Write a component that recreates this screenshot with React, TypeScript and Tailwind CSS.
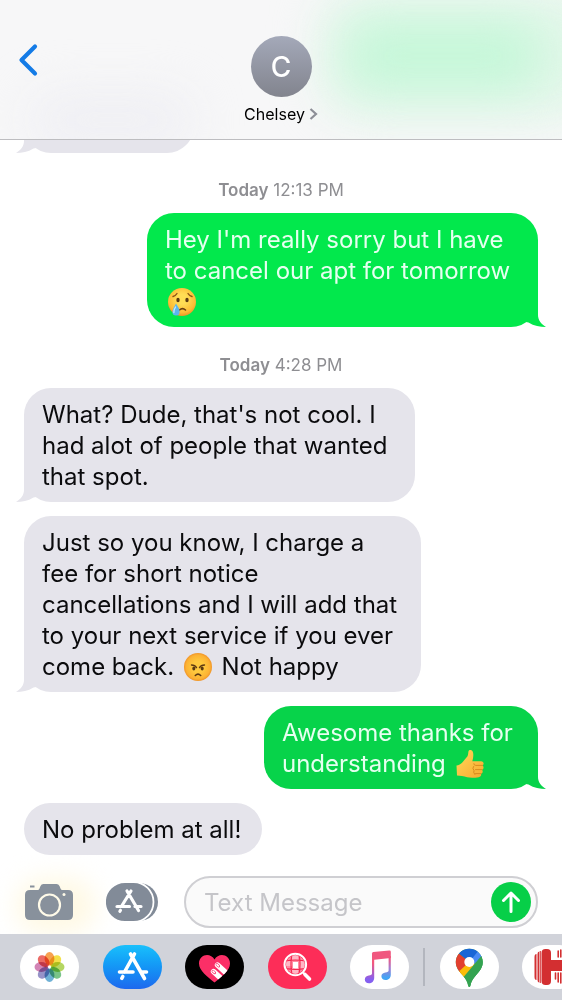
import React from 'react';

type Message = {
  from: 'me' | 'them';
  lines: React.ReactNode[];
  className: string;
  tail?: boolean;
};

function CryingFace() {
  return (
    <svg viewBox="0 0 30 30" role="img" aria-label="crying face" className="mx-0.5 inline-block size-[30px] align-[-7px]">
      <defs>
        <radialGradient id="cry" cx="0.5" cy="0.4" r="0.6">
          <stop offset="0.3" stopColor="#ffdd55" />
          <stop offset="0.8" stopColor="#fdbb35" />
          <stop offset="1" stopColor="#ee9427" />
        </radialGradient>
      </defs>
      <circle cx="15" cy="15" r="14" fill="url(#cry)" />
      <path d="M6 9.500q2.500-.5 4-3M25 9.500q-2.500-.5-4-3" stroke="#8a5414" strokeWidth="1.400" fill="none" strokeLinecap="round" />
      <ellipse cx="11" cy="13" rx="1.700" ry="2.300" fill="#5b3a12" />
      <ellipse cx="20" cy="13" rx="1.700" ry="2.300" fill="#5b3a12" />
      <path d="M12.500 23q3-2.800 6 0" stroke="#6b3f10" strokeWidth="1.600" fill="none" strokeLinecap="round" />
      <path d="M9 16.500c2.500 4 3.800 6 3.600 8.500a3.600 3.600 0 0 1-7.200 0c0-2.500 1.500-4.500 3.600-8.500z" fill="#5cb5ee" />
      <path d="M8.500 20c-1.500 2.500-2 4-1.600 5.500" stroke="#c9ecff" strokeWidth="1.300" fill="none" strokeLinecap="round" />
    </svg>
  );
}

function AngryFace() {
  return (
    <svg viewBox="0 0 30 30" role="img" aria-label="angry face" className="mx-0.5 inline-block size-[30px] align-[-7px]">
      <defs>
        <radialGradient id="angry" cx="0.5" cy="0.5" r="0.5">
          <stop offset="0.4" stopColor="#ffc93e" />
          <stop offset="0.85" stopColor="#fcb233" />
          <stop offset="1" stopColor="#f0952a" />
        </radialGradient>
      </defs>
      <circle cx="15" cy="15" r="14" fill="url(#angry)" />
      <path d="M8.500 13c2.500 0 4 .8 5 2.600M21.500 13c-2.500 0-4 .8-5 2.600" stroke="#5f3a12" strokeWidth="1.400" fill="none" strokeLinecap="round" />
      <ellipse cx="10.800" cy="16.500" rx="1.500" ry="2" fill="#5b3a12" />
      <ellipse cx="19.200" cy="16.500" rx="1.500" ry="2" fill="#5b3a12" />
      <path d="M12.300 23.500q2.700-2.600 5.400 0" stroke="#5f3a12" strokeWidth="1.600" fill="none" strokeLinecap="round" />
    </svg>
  );
}

function ThumbsUp() {
  return (
    <svg viewBox="0 0 30 30" role="img" aria-label="thumbs up" className="mx-0.5 inline-block size-[30px] align-[-7px]">
      <defs>
        <linearGradient id="thumb" x1="0" y1="0" x2="1" y2="1">
          <stop offset="0" stopColor="#ffd95a" />
          <stop offset="1" stopColor="#f7a92f" />
        </linearGradient>
      </defs>
      <path
        d="M1.500 16.500c2-.3 4.500-1.500 6-3.300l5-6c.8-1.300.6-3.200 1-4.900.5-1.800 3.400-1.700 4.300.4 1 2.500.4 6.500-.5 9.500h8.700c3 0 3.400 3.600 1.200 4.300 2 .8 1.700 3.900-.3 4.300 1.400 1 1 3.500-1 4 .8 1.500-.2 3.200-2.200 3.400-3.500.6-8.500.8-11.500.1-3.500-1-7-1.800-10.200-1.800z"
        fill="url(#thumb)"
      />
      <path d="M27.500 16.400h-6.700q-2 0-2-1.700M27 20.600h-6.500M26 24.600h-5.500M18.500 17.500q-1.500 2 .5 4-1 2 .8 4" stroke="#d98a1d" strokeWidth="1" fill="none" strokeLinecap="round" />
    </svg>
  );
}

function Tail({ from }: { from: 'me' | 'them' }) {
  return from === 'me' ? (
    <svg viewBox="0 0 20 27" className="absolute -right-2 bottom-0 h-[27px] w-5" fill="currentColor" aria-hidden="true">
      <path d="M12 0v15c0 5 3 9 8 12-6 0-12-1-17.500-4.500L0 22V0z" />
    </svg>
  ) : (
    <svg viewBox="0 0 20 27" className="absolute -left-2 bottom-0 h-[27px] w-5" fill="currentColor" aria-hidden="true">
      <path d="M8 0v15c0 5-3 9-8 12 6 0 12-1 17.500-4.500L20 22V0z" />
    </svg>
  );
}

function Bubble({ from, lines, className, tail }: Message) {
  return (
    <div className={'relative max-w-full rounded-[27px] pt-[11px] pb-[10px] pl-[18px] text-2xl leading-[31px] whitespace-nowrap ' + className}>
      {tail && <Tail from={from} />}
      <p className={from === 'me' ? 'relative text-[#e6fff0]' : 'relative text-[#0b0b0d]'}>
        {lines.map((line, index) => (
          <span key={index} className="block h-[31px]">
            {line}
          </span>
        ))}
      </p>
    </div>
  );
}

function Timestamp({ time, className }: { time: string; className: string }) {
  return (
    <p className={'text-center text-[17px] leading-5 text-[#8e8e92] ' + className}>
      <strong className="font-semibold">Today</strong> {time}
    </p>
  );
}

function PhotosIcon() {
  const petals = ['#f58a24', '#f0d91c', '#a3cc3a', '#57b56a', '#4b9dcb', '#7d78ba', '#c765a2', '#e64640'];
  return (
    <svg viewBox="0 0 59 44" className="h-11 w-[59px]">
      {petals.map((color, index) => (
        <ellipse key={color} cx="29.500" cy="13.800" rx="4.900" ry="6.800" fill={color} className="mix-blend-multiply" opacity="0.8" transform={`rotate(${index * 45} 29.5 22)`} />
      ))}
    </svg>
  );
}

function StoreIcon() {
  return (
    <svg viewBox="0 0 59 44" className="h-11 w-[59px]" stroke="#fff" strokeWidth="3.600" strokeLinecap="round" fill="none">
      <path d="M31.500 9L21.500 27M27.500 9l14 24.500M16.500 27H30M38 27h5.500M19.800 31.500l-1 1.800" />
    </svg>
  );
}

function HeartIcon() {
  return (
    <svg viewBox="0 0 59 44" className="h-11 w-[59px]">
      <defs>
        <clipPath id="heart">
          <path d="M29.500 37.500C23 32 14 26 14 18.500c0-9.500 11.500-11.500 15.500-4 4-7.500 15.500-5.500 15.500 4 0 7.500-9 13.500-15.500 19z" />
        </clipPath>
      </defs>
      <g clipPath="url(#heart)">
        <path d="M10 5h40v35H10z" fill="#fb2f67" />
        <path d="M32.500 20l13 12M28.500 26.500l13 12" stroke="#fff" strokeWidth="5.400" strokeLinecap="round" />
        <path d="M32 19.600l1.600 1.500M28 26.200l1.600 1.500" stroke="#fb2f67" strokeWidth="2.800" strokeLinecap="round" />
        <path d="M32 19.600l1.400 1.300M28 26.200l1.400 1.300" stroke="#fff" strokeWidth="1.600" strokeLinecap="round" />
      </g>
    </svg>
  );
}

function ImagesIcon() {
  return (
    <svg viewBox="0 0 59 44" className="h-11 w-[59px]" fill="none">
      <defs>
        <clipPath id="lens">
          <circle cx="27.300" cy="19.500" r="9.300" />
        </clipPath>
      </defs>
      <g clipPath="url(#lens)">
        <path d="M17 9h21v21H17z" fill="#ff8da3" />
        <path d="M24 9h6v6h-6zM31 15h7v8h-7zM17 15h7v6h-7zM24 23h6v8h-6z" fill="#ffb7c5" />
        <path d="M25 17h5v6h-5z" fill="#fff" />
        <path d="M24 9q-2 10 0 21M31 9q2 10 0 21M17 16q10-2 21 0M17 23.500q10 2 21 0" stroke="#f5274f" strokeWidth="1.200" />
      </g>
      <circle cx="27.300" cy="19.500" r="10.800" stroke="#fff" strokeWidth="2" />
      <path d="M35 27.500l2 2" stroke="#fff" strokeWidth="2" />
      <path d="M37 29.500l4.500 4.500" stroke="#fff" strokeWidth="3.600" strokeLinecap="round" />
    </svg>
  );
}

function MusicIcon() {
  return (
    <svg viewBox="0 0 59 44" className="h-11 w-[59px]">
      <defs>
        <linearGradient id="leftNote" x1="0" y1="0" x2="0" y2="1">
          <stop offset="0.2" stopColor="#f4587c" />
          <stop offset="0.85" stopColor="#8560f0" />
        </linearGradient>
        <linearGradient id="rightNote" x1="0" y1="0" x2="0" y2="1">
          <stop offset="0.1" stopColor="#f0577f" />
          <stop offset="0.5" stopColor="#a47bd0" />
          <stop offset="0.9" stopColor="#42a5f5" />
        </linearGradient>
      </defs>
      <path d="M22 8.500q0-1.300 1.300-1.500l16-1.400q1.500-.1 1.500 1.300v6l-18.800 2z" fill="#f0577f" />
      <path d="M22 13h2.200v19.500c0 4-2.500 5.800-5.200 5.800-2.500 0-4.200-1.500-4.200-3.700 0-2.500 1.700-3.700 4-4.100 2.200-.4 3.200-.7 3.200-2z" fill="url(#leftNote)" />
      <path d="M38.600 11h2.200v18.500c0 4-2.500 5.500-5.200 5.500-2.500 0-4.200-1.500-4.200-3.700 0-2.500 1.700-3.500 4-3.900 2.200-.4 3.200-.7 3.200-2z" fill="url(#rightNote)" />
    </svg>
  );
}

function MapsIcon() {
  return (
    <svg viewBox="0 0 59 44" className="h-11 w-[59px]">
      <defs>
        <clipPath id="pin">
          <path d="M29.300 3.700c7.500 0 13.500 6 13.500 13.300 0 6-3.500 9.500-7 13.500-3 3.500-4.500 6-5.200 9.500-.4 2.500-2.200 2.500-2.600 0-.7-3.500-2.200-6-5.200-9.500-3.500-4-7-7.500-7-13.500 0-7.300 6-13.300 13.500-13.300z" />
        </clipPath>
      </defs>
      <g clipPath="url(#pin)">
        <path d="M10 0h40v44H10z" fill="#34a351" />
        <path d="M18 7.500L29.300 17 20 29 8 27V8z" fill="#e2402f" />
        <path d="M29.300 17L15 30l6 6L37 18z" fill="#fbbc08" />
        <path d="M16 6L29.300 17l11-12L38 0H16z" fill="#1a66d6" />
        <path d="M39 5L29.300 17l5 2 9-8.500z" fill="#4a8af4" />
        <path d="M43 9L18.500 38 30 46l20-28z" fill="#34a351" />
      </g>
      <circle cx="29.300" cy="17" r="5" fill="#fff" />
    </svg>
  );
}

function HIcon() {
  return (
    <svg viewBox="0 0 59 44" className="h-11 w-[59px]" fill="#d32f31">
      <rect x="19.500" y="4" width="9.500" height="36" rx="4" />
      <path d="M28 15h17v11H28z" />
      <path d="M12.500 12q0-3 2-3v26q-2 0-2-3zM15.500 9q0-2.500 1.800-2.500v31q-1.800 0-1.800-2.500z" />
      <path d="M18.300 6v32" stroke="#d32f31" strokeWidth="1" />
      <path d="M33.500 28v6M36.200 28v9M38.800 28v10M36.200 6v6M38.800 5v7" stroke="#d32f31" strokeWidth="1.600" strokeLinecap="round" />
      <rect x="40" y="4" width="9.500" height="36" rx="3" />
    </svg>
  );
}

const trayApps = [
  { name: 'Photos', icon: <PhotosIcon />, className: 'bg-white' },
  { name: 'App Store', icon: <StoreIcon />, className: 'bg-linear-to-b from-[#1bc0fb] to-[#1e68ee]' },
  { name: 'Digital Touch', icon: <HeartIcon />, className: 'bg-black' },
  { name: 'Images', icon: <ImagesIcon />, className: 'bg-[#fd2d58]' },
  { name: 'Music', icon: <MusicIcon />, className: 'bg-white' },
];

export default function App() {
  return (
    <div className="flex h-screen w-full flex-col overflow-hidden bg-white font-['Inter','Liberation_Sans',sans-serif]">
      <header className="relative shrink-0 overflow-hidden border-b border-[#bdbdc0] bg-[#f7f7f8]">
        <div className="absolute -top-2 -right-10 h-[124px] w-[280px] rounded-[40px] bg-[#e0f7e8] blur-xl" />
        <div className="absolute top-6 right-6 h-16 w-[190px] rounded-[20px] bg-[#c4f7d8] blur-xl" />
        <div className="absolute top-24 left-8 h-12 w-40 rounded-full bg-[#eeeef3] blur-xl" />
        <div className="relative grid grid-cols-[1fr_auto_1fr] items-start pt-9 pb-[15px]">
          <button aria-label="Back" className="ml-4 flex h-12 w-8 items-center">
            <svg viewBox="0 0 24 36" className="h-9 w-6" fill="none" stroke="#147be6" strokeWidth="4.200" strokeLinecap="round" strokeLinejoin="round">
              <path d="M19 4.500L5.500 18 19 31.500" />
            </svg>
          </button>
          <button className="flex flex-col items-center gap-[7px]">
            <span className="flex size-[61px] items-center justify-center rounded-full bg-linear-to-b from-[#a4a9b9] to-[#82848e] text-[28px] font-medium text-white">C</span>
            <span className="flex items-center gap-1 text-base leading-5 text-black">
              Chelsey
              <svg viewBox="0 0 9 14" className="h-3.5 w-[9px]" fill="none" stroke="#8d8f97" strokeWidth="2.200">
                <path d="M1.500 2l5.500 5-5.500 5" />
              </svg>
            </span>
          </button>
        </div>
      </header>

      <main className="flex min-h-0 flex-1 flex-col items-start overflow-hidden px-6">
        <div className="relative -mt-[41px] h-[54px] w-[170px] shrink-0 rounded-[27px] bg-[#e5e4eb] text-[#e5e4eb]">
          <Tail from="them" />
        </div>
        <Timestamp time="12:13 PM" className="mt-[27px] w-full" />
        <Bubble
          from="me"
          tail
          className="mt-[13px] w-[391px] self-end bg-[#02e84c] text-[#02e84c]"
          lines={["Hey I'm really sorry but I have", 'to cancel our apt for tomorrow', <CryingFace />]}
        />
        <Timestamp time="4:28 PM" className="mt-7 w-full" />
        <Bubble
          from="them"
          tail
          className="mt-[13px] w-[391px] bg-[#e5e4eb] text-[#e5e4eb]"
          lines={["What? Dude, that's not cool. I", 'had alot of people that wanted', 'that spot.']}
        />
        <Bubble
          from="them"
          tail
          className="mt-3.5 w-[397px] bg-[#e5e4eb] text-[#e5e4eb]"
          lines={[
            'Just so you know, I charge a',
            'fee for short notice',
            'cancellations and I will add that',
            'to your next service if you ever',
            <>come back. <AngryFace /> Not happy</>,
          ]}
        />
        <Bubble
          from="me"
          tail
          className="mt-3.5 w-[274px] self-end bg-[#07d34a] text-[#07d34a]"
          lines={['Awesome thanks for', <>understanding <ThumbsUp /></>]}
        />
        <Bubble from="them" className="mt-3.5 w-[238px] bg-[#e5e4eb] text-[#e5e4eb]" lines={['No problem at all!']} />
      </main>

      <footer className="shrink-0">
        <form className="relative flex items-center px-6 py-1.5" onSubmit={(e) => e.preventDefault()}>
          <div className="absolute top-2 left-4 h-14 w-20 rounded-full bg-[#fff9e4] blur-md" />
          <button type="button" aria-label="Camera" className="relative">
            <svg viewBox="0 0 50 38" className="h-[38px] w-[50px]" fill="#88919c">
              <path d="M6 2.500h4.500v2H6z" />
              <path d="M6 7h7.500q1.500 0 2-1.500L16.500 3q.8-2 3-2h13q2 0 3 2l1 2.500q.5 1.500 2 1.500H44q5 0 5 5v20q0 5-5 5H6q-5 0-5-5V12q0-5 5-5z" />
              <circle cx="25.500" cy="22" r="10.500" fill="none" stroke="#fffbe9" strokeWidth="2.200" />
              <circle cx="40" cy="11.500" r="1.500" fill="#fffbe9" />
            </svg>
          </button>
          <button type="button" aria-label="Apps" className="relative ml-8">
            <svg viewBox="0 0 52 40" className="h-10 w-[52px]" fill="#828b98">
              <rect x="12" y="1" width="40" height="38" rx="19" />
              <rect x="-1" y="0" width="48.500" height="40" rx="20" stroke="#fff" strokeWidth="1.800" />
              <path d="M25 9L16 23.500M21 9l11.500 19.500M11 24.500h12.500M29 24.500h6M14.500 28.300l-.6 1" fill="none" stroke="#fff" strokeWidth="3.200" strokeLinecap="round" />
            </svg>
          </button>
          <div className="relative ml-[26px] flex h-[52px] min-w-0 flex-1 items-center rounded-full border-2 border-[#cfcfd3] bg-[#fafafa] pr-[5px] pl-[18px]">
            <input type="text" aria-label="Text Message" placeholder="Text Message" className="h-12 min-w-0 flex-1 bg-transparent text-2xl outline-none placeholder:text-[#c5c5c9]" />
            <button type="submit" aria-label="Send" className="flex size-10 shrink-0 items-center justify-center rounded-full bg-[#07cf48]">
              <svg viewBox="0 0 24 24" className="size-6" fill="none" stroke="#fff" strokeWidth="3" strokeLinecap="round" strokeLinejoin="round">
                <path d="M12 21.500V3M4.500 10.500L12 3l7.500 7.500" />
              </svg>
            </button>
          </div>
        </form>

        <nav className="relative flex h-[66px] items-center overflow-hidden bg-[#d1d3da] pl-5">
          <div className="flex w-[389px] shrink-0 justify-between">
            {trayApps.map((app) => (
              <button key={app.name} aria-label={app.name} className={'overflow-hidden rounded-full ' + app.className}>
                {app.icon}
              </button>
            ))}
          </div>
          <div className="ml-3.5 h-[38px] w-0.5 shrink-0 bg-[#b3b6be]" />
          <button aria-label="Maps" className="ml-[15px] shrink-0 rounded-full bg-white">
            <MapsIcon />
          </button>
          <button aria-label="Hotels" className="ml-[23px] shrink-0 overflow-hidden rounded-full bg-white">
            <HIcon />
          </button>
        </nav>
      </footer>
    </div>
  );
}
